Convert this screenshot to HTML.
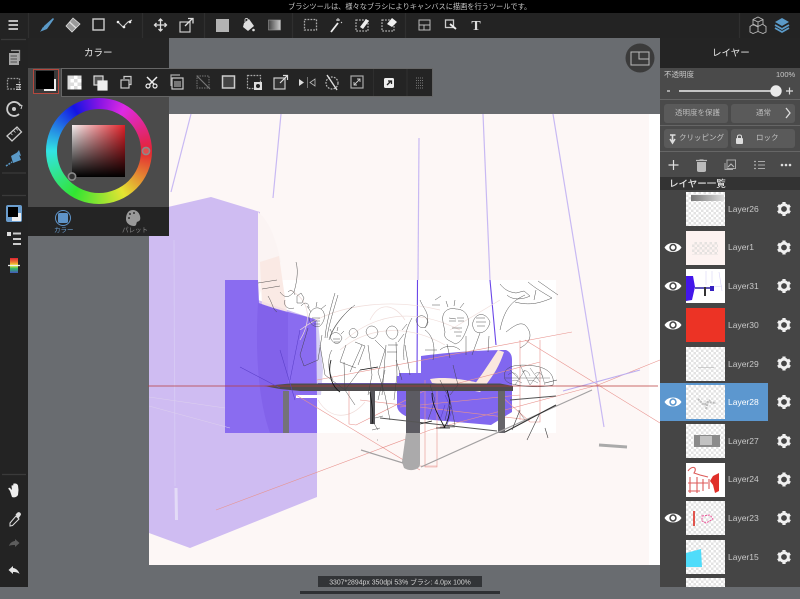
<!DOCTYPE html>
<html><head><meta charset="utf-8">
<style>
html,body{margin:0;padding:0;background:#696c70}
#r{position:relative;width:800px;height:599px;overflow:hidden;background:#696c70;font-family:"Liberation Sans","Noto Sans CJK JP",sans-serif;color:#ddd;filter:blur(.35px)}
#r div{position:absolute;box-sizing:border-box}
#r svg{position:absolute;overflow:visible}
.t{white-space:nowrap;line-height:1}
.btn{background:#5a5a5a;border-radius:3px;height:19px;width:64px}
.th{left:686px;width:39px;height:34px;background-color:#fff;background-image:conic-gradient(#e2e2e2 25%,#fff 0 50%,#e2e2e2 0 75%,#fff 0);background-size:5px 5px;overflow:hidden}
.lb{left:728px;font-size:8.5px;color:#c9c9c9}
</style></head><body><div id="r">

<!-- canvas -->
<svg style="left:0;top:0" width="800" height="599" viewBox="0 0 800 599">
<rect x="149" y="114" width="511" height="451" fill="#fdf7f6"/>
<rect x="649" y="114" width="11" height="451" fill="#fff"/>
<rect x="225" y="280" width="331" height="153" fill="#fff"/>
<!-- guide lines -->
<g fill="none" stroke="#c8b9f3" stroke-width="1.200">
<path d="M191 114L171 192"/><path d="M281 114L273 198"/>
<path d="M419 138L418 280"/><path d="M483 114L490 280"/><path d="M553 114L604 427"/>
</g>
<path d="M490 280L496 345M417.500 280L417 380" stroke="#6a46e8" stroke-width="1.100" fill="none"/>
<!-- lavender shape -->
<path d="M149 208L168 207L211 197L260 212L258 300L317 320L317 497L190 548L149 533Z" fill="#cfbcf2"/>
<path d="M258 212C268 220 275 235 281 262C270 270 262 285 258 300Z" fill="#fbf4f3"/>
<path d="M176 488L176.500 520" stroke="#e3dbf7" stroke-width="3"/><path d="M174 240L175 486" stroke="#d6c9f4" stroke-width="1"/>
<path d="M260 262L279 256L287 312L262 304Z" fill="#f9e6e0" opacity=".85"/>
<!-- purple rect -->
<path d="M225 280H258L259 303C275 310 300 314 317 320V433H225Z" fill="#8a6cf0"/>
<path d="M258 303L288 313V433H270C258 400 255 350 258 303Z" fill="#8262ea"/>
<path d="M316 320L317 395H321L323 370L318 322Z" fill="#d6cff4"/>
<!-- sofa -->
<path d="M421 356C450 352 485 350 506 350C511 352 512 356 512 360V412L491 425L410 418C400 414 397 410 397 405V376H399V373L421 373Z" fill="#8167ef"/>
<path d="M318 383H400V391H318Z" fill="#7e60ea"/>
<path d="M296 395H318V398H296Z" fill="#fff"/>
<!-- pale peach body over sofa -->
<path d="M470 390C480 378 490 362 498 350L504 352C498 370 490 380 480 392Z" fill="#fbe8df"/>
<path d="M430 379C445 376 470 380 482 384L478 386C470 384 450 385 432 383Z" fill="#fbe8df"/>
<!-- pale sketch -->
<g fill="none" stroke="#efdcd9" stroke-width=".7">
<path d="M300 330C340 300 400 300 440 310M318 400C330 420 350 420 365 402M290 290C310 300 312 320 300 340"/>
<path d="M370 320C380 300 395 305 405 320M450 330L500 300M345 340C380 310 420 310 460 330M340 350C370 325 410 325 445 345"/>
<path d="M149 397L225 408M149 406L230 428" stroke="#ddd0ee" stroke-width=".5"/>
</g>
<!-- red perspective -->
<g fill="none" stroke="#e8938e" stroke-width=".6">
<path d="M296 395L420 470M216 510L430 430L598 385"/>
<path d="M317 380L572 332M525 340L660 423M598 385L660 360"/>
<path d="M349 388V424L356 425L430 388M425 380V467H437V390M419 390V466H437M360 400L530 420M500 395L530 422H540V340M520 340V420M400 407L520 395M432 390L540 362"/>
</g>
<path d="M563 391L640 370" stroke="#bdaef0" stroke-width="1.100"/>
<!-- table -->
<path d="M264 386L290 383.500H500L513 386V391H300L280 389Z" fill="#4f4c4e"/>
<rect x="283" y="391" width="6" height="42" fill="#747278"/>
<rect x="406" y="391" width="14" height="42" fill="#5c5b62"/>
<path d="M406 433H420V464C420 470 410 472 404 468L402 462Z" fill="#abaaab"/>
<rect x="498" y="391" width="7" height="42" fill="#66656a"/>
<rect x="370" y="391" width="5" height="33" fill="#56555a"/>
<path d="M148 386H658" stroke="#b83c3c" stroke-width=".8"/>
<path d="M361 450L403 463M421 467L592 390" stroke="#a3a1a2" stroke-width="1.200" fill="none"/>
<path d="M505 432L556 405" stroke="#333" stroke-width="1.100"/>
<path d="M510 400L556 396M380 418L497 431" stroke="#555" stroke-width=".9"/>
<path d="M599 445L627 447" stroke="#aaa" stroke-width="3"/>
<!-- sketch -->
<g fill="none" stroke="#3e3e3e" stroke-width=".45">
<path d="M258 283L277 280M262 289L280 286M296 262C299 272 296 285 294 292C290 296 286 300 280 292M268 296C272 302 273 310 277 312M285 300C283 306 288 310 294 308"/>
<path d="M297 296l4 -3 3 5 -2 5 -5 0zM301 306c4 -5 8 -3 8 2M288 292c3 -3 6 -1 7 3"/>
<path d="M309 316C311 308 318 305 323 311C326 316 324 322 320 326C314 328 309 324 309 316ZM311 312L307 306M316 307L317 302M321 309L326 305M312 318h8M312 321h8M314 324h6"/>
<path d="M308 328L300 355L304 366L318 360L322 335"/>
<path d="M320 345L325 375L345 390M335 293C330 310 326 325 325 338M338 295C333 312 328 328 327 338M355 305C342 315 332 328 329 340M352 307C340 318 332 330 330 338"/>
<path d="M330 337C333 330 340 332 342 338C340 345 334 346 330 337ZM332 333l-2 -4M337 331l1 -4M341 334l3 -3M333 339h7M334 342h6"/>
<path d="M349 333C350 327 356 327 358 333C357 339 351 340 349 333ZM346 345L340 362L356 368M355 342L365 346L358 365"/>
<path d="M366 332C367 324 376 324 378 332C377 340 369 341 366 332ZM362 345L350 372M375 340L385 350L378 372L385 395M368 345L372 375L368 395"/>
<path d="M386 332C388 324 396 324 398 332C397 341 389 342 386 332ZM386 345L382 395M396 342L397 375L394 400M388 345h10M387 352h10"/>
<path d="M416 320C418 314 426 314 428 322C427 330 418 330 416 320ZM405 345L410 375M420 300C424 310 432 315 425 328M412 318C405 330 403 345 404 360M396 360L402 380M402 330l5 -6M398 342l6 -8"/>
<path d="M425 330C432 335 436 345 433 360M435 300l6 -4M432 305l8 0M425 350l12 0M440 350C445 345 455 345 460 350"/>
<path d="M443 322C441 312 448 307 456 309C466 309 470 318 468 326C464 336 462 342 455 344C450 340 443 340 445 332ZM448 307l-2 -6M454 306l1 -6M460 308l4 -5M449 318l7 1M457 318l7 0M449 321h7M458 321h6M452 328h10M454 332h8M456 336h5"/>
<path d="M466 336L466 355M447 344L450 358"/>
<path d="M473 322C476 312 486 312 490 322C488 332 480 335 475 331C473 328 472 325 473 322ZM476 318h9M476 322h10M477 326h8M480 333L472 355M489 336L488 352"/>
<path d="M500 330C505 305 515 300 525 295M500 284C504 289 508 292 516 293L524 291L530 296C522 300 512 300 507 295M515 302C530 306 540 303 552 298M528 282C535 288 542 292 552 298M538 281L558 295M536 290L534 300M506 332C515 325 520 322 525 325M525 325C530 330 535 340 520 348"/>
<path d="M333 380C327 370 328 355 332 350M344 362L345 390L360 370M345 390L355 405M385 370L378 400M378 430L372 420M385 395L390 420M375 418l8 -2M372 430l8 -2M378 440h-1M430 385L435 400L428 420M440 380L450 400L445 420M453 365L458 385L450 395M450 400L455 425L440 428M440 427h15"/>
<path d="M505 372C508 365 520 364 535 366C548 368 555 375 553 385C540 388 525 387 512 384C505 382 503 378 505 372Z"/>
<path d="M510 370L520 380M520 365L530 385M530 368L540 382M540 368L545 385M515 385L525 370M530 385L540 372M505 378L550 378M508 375c4 -4 8 -2 10 2M522 372c4 -3 7 0 8 4M535 374c3 -3 6 -1 8 3M512 381c4 -2 6 0 10 2M528 381c4 -2 6 0 10 2" stroke-width=".35"/>
<path d="M545 383L557 380M512 430L520 410M527 440L540 413M548 438L545 428" stroke-width=".6"/>
<path d="M518 410L525 420" stroke-width=".35"/>
</g>
<g fill="none" stroke="#141414" stroke-width=".85">
<path d="M331 360C328 370 330 385 340 392M360 370L378 367M370 392C372 405 374 415 372 424M432 393C432 405 438 415 445 428M447 390C452 405 450 418 444 428M420 424L432 421M436 428H450"/>
</g>
<path d="M445 395L452 410L447 425M445 405L440 420M300 330L290 380M280 350L295 400M240 367L280 388" stroke="#5a3fc8" stroke-width=".55" fill="none"/>
<!-- bottom status -->
<rect x="318" y="576" width="164" height="11" fill="#323437"/>
<text x="400" y="584.300" font-size="6.900" fill="#d4d4d4" text-anchor="middle" font-family="Liberation Sans,Noto Sans CJK JP,sans-serif">3307*2894px 350dpi 53% ブラシ: 4.0px 100%</text>
<rect x="300" y="591" width="200" height="3" fill="#2e3033"/>
<!-- nav -->
<circle cx="640" cy="58" r="14.500" fill="#3b3b3b"/>
<rect x="631" y="52" width="18" height="13" fill="none" stroke="#bbb" stroke-width="1"/><rect x="639" y="52" width="10" height="7" fill="none" stroke="#bbb" stroke-width="1"/>
</svg>

<!-- top bars -->
<div style="left:0;top:0;width:800px;height:13px;background:#000"></div>
<div class="t" style="left:288px;top:2.500px;font-size:7.200px;color:#c8c8c8">ブラシツールは、様々なブラシによりキャンバスに描画を行うツールです。</div>
<div style="left:0;top:13px;width:800px;height:25px;background:#232323"></div>

<!-- left bar -->
<div style="left:0;top:38px;width:28px;height:549px;background:#232323"></div>

<!-- color panel -->
<div style="left:28px;top:38px;width:141px;height:30px;background:#242424"></div>
<div class="t" style="left:84px;top:48.500px;font-size:9.500px;color:#e8e8e8">カラー</div>
<div style="left:28px;top:68px;width:141px;height:139px;background:#4b4b4b"></div>
<div style="left:28px;top:207px;width:141px;height:29px;background:#242424"></div>
<div class="t" style="left:54px;top:228px;font-size:6.500px;color:#6a9ccc">カラー</div>
<div class="t" style="left:122px;top:228px;font-size:6.500px;color:#888">パレット</div>
<div style="left:33px;top:69px;width:26px;height:25px;background:#3a3a3a;border:1px solid #b5483e"></div>
<div style="left:44px;top:79px;width:12px;height:12px;background:#eee"></div>
<div style="left:36px;top:71px;width:18px;height:18px;background:#000"></div>
<div style="left:45.500px;top:98px;width:106px;height:106px;border-radius:50%;opacity:.93;background:conic-gradient(#8a10f0,#e828f0 30deg,#f02030 90deg,#f0f030 150deg,#30f030 210deg,#30f0f0 270deg,#1010f0 330deg,#8a10f0)"></div>
<div style="left:56.500px;top:109px;width:84px;height:84px;border-radius:50%;background:#4b4b4b"></div>
<div style="left:72px;top:125px;width:53px;height:52px;background:linear-gradient(to bottom,transparent,#000),linear-gradient(to right,#f4f0f0,#e02028)"></div>
<svg style="left:0;top:0" width="170" height="240" viewBox="0 0 170 240" fill="none">
<circle cx="146" cy="151" r="3.600" stroke="#8a8a8a" stroke-width="1.600" fill="#e05050"/>
<circle cx="72" cy="176.500" r="3.600" stroke="#8a8a8a" stroke-width="1.600" fill="#333"/>
<circle cx="63" cy="218" r="7.500" stroke="#5f94c8" stroke-width="1"/>
<rect x="58" y="213" width="10" height="10" rx="1.500" fill="#5f94c8"/>
<path d="M133 210C127 210 126 216 126 219C126 224 131 226 134 226C137 226 136 223 137 222C139 221 141 221 140 216C139 212 136 210 133 210Z" fill="#999"/>
<circle cx="130" cy="214" r="1" fill="#333"/><circle cx="134" cy="213" r="1" fill="#333"/><circle cx="129" cy="218" r="1" fill="#333"/>
</svg>

<!-- floating toolbar -->
<div style="left:61px;top:68px;width:372px;height:29px;background:#242424;border:1px solid #666"></div>
<svg style="left:0;top:0" width="440" height="100" viewBox="0 0 440 100" fill="none" stroke="#ddd" stroke-width="1.200">
<rect x="67.500" y="75.500" width="14" height="14" fill="#ddd" stroke="none"/><path d="M74 75.500h3.500v3.500h-3.500zM70.500 79h3.500v3.500h-3.500zM77.500 79h4v3.500h-4zM74 82.500h3.500V86h-3.500zM70.500 86h3.500v3.500h-3.500zM77.500 86h4v3.500h-4z" fill="#fff" stroke="none"/>
<rect x="94" y="76" width="9" height="9" fill="#555" stroke="#ddd"/><rect x="98" y="81" width="9" height="9" fill="#eee" stroke="#eee"/>
<rect x="121" y="80" width="8" height="8" stroke="#ccc"/><path d="M124 79v-2.500h7v8h-2" stroke="#ccc"/>
<path d="M147 77L157 87M157 77L147 87" stroke-width="1.500" stroke="#eee"/><circle cx="148" cy="86" r="2" fill="#242424" stroke="#eee"/><circle cx="155" cy="86" r="2" fill="#242424" stroke="#eee"/>
<rect x="172" y="78" width="11" height="11" stroke="#ccc"/><path d="M171 86V75h9" stroke="#aaa"/><rect x="174" y="81" width="7" height="6" fill="#777" stroke="none"/>
<rect x="197" y="76" width="12" height="12" stroke="#666" stroke-dasharray="1.500 1"/><path d="M197 76L210 89" stroke="#777"/>
<rect x="222.500" y="76" width="12" height="12" fill="#444" stroke="#ccc" stroke-width="1.500"/>
<rect x="247.500" y="75.500" width="13" height="13" stroke="#aaa" stroke-dasharray="1.800 1.200"/><rect x="254" y="82" width="8" height="8" fill="#ddd" stroke="none"/><circle cx="258" cy="86" r="2" fill="#222" stroke="none"/>
<rect x="274" y="78" width="11" height="11" stroke="#ccc" fill="#333"/><path d="M280 83L287 76M283 75.500h4.500V80" stroke="#ddd"/>
<path d="M299 79V86L304 82.500Z" fill="#ddd" stroke="none"/><path d="M307.500 77V88" stroke="#888" stroke-width=".8"/><path d="M315 79V86L310 82.500Z" stroke="#bbb" stroke-width=".8"/>
<circle cx="332" cy="83" r="6" stroke="#bbb" stroke-dasharray="1.800 1.200"/><path d="M327 75L337 90" stroke="#ddd" stroke-width="1.400"/>
<rect x="351" y="76" width="12" height="12" stroke="#aaa"/><path d="M354 85L360 79M354 82V85H357M360 82V79H357" stroke="#ccc" stroke-width=".9"/>
<path d="M373.500 69V96M407 69V96" stroke="#2e2e2e"/>
<rect x="384" y="78" width="10" height="10" rx="1.500" fill="#eee" stroke="none"/><path d="M387 85L391 81M388 81H391.500V84" stroke="#222" stroke-width="1.300"/>
<path d="M416 78h7M416 80.500h7M416 83h7M416 85.500h7M416 88h7" stroke="#777" stroke-width="1" stroke-dasharray="1 1"/>
</svg>

<!-- top toolbar + side icons -->
<svg style="left:0;top:0" width="800" height="599" viewBox="0 0 800 599" fill="none" stroke="#ddd" stroke-width="1.300">
<path d="M18 21H8.500M18 25H8.500M18 29H8.500" stroke="#eee" stroke-width="1.500"/>
<path d="M28.500 13V38M142.500 13V38M204.500 13V38M292.500 13V38M405.500 13V38M739.500 13V38" stroke="#2f2f2f"/>
<path d="M42 31L44 26L53 18L54 19L47 29Z" fill="#5b9ac8" stroke="none"/><path d="M40 32L43 27L45 29Z" fill="#5b9ac8" stroke="none"/>
<path d="M66 26L73 18L80 24L72 32Z" fill="#999" stroke="#ddd" stroke-width=".8"/><path d="M69.500 22L76 28" stroke="#ddd"/>
<rect x="93" y="19" width="11" height="11" stroke="#ccc" stroke-width="1.400"/>
<path d="M118 22L123 27L128 22L132 20" stroke="#ccc" stroke-width="1.100"/><circle cx="118" cy="22" r="1.300" fill="#eee" stroke="none"/><circle cx="124" cy="27" r="1.300" fill="#eee" stroke="none"/><circle cx="130" cy="22" r="1.300" fill="#eee" stroke="none"/>
<path d="M160.500 19V31M154.500 25H166.500M158.500 21L160.500 19L162.500 21M158.500 29L160.500 31L162.500 29M156.500 23L154.500 25L156.500 27M164.500 23L166.500 25L164.500 27"/>
<rect x="180" y="22" width="10" height="10" stroke="#ccc" stroke-width="1.200"/><path d="M185 26L192 19M188 18.500H193V23.500" stroke="#ddd"/>
<rect x="216" y="19" width="13" height="13" fill="#b3b3b3" stroke="none"/>
<path d="M244 23L249 19L254 26L248 31L243 27Z" fill="#ddd" stroke="none"/><path d="M245 22V19.500C245 18 248 18 248 20" stroke="#ddd" stroke-width=".8"/><circle cx="253.500" cy="30" r="1.300" fill="#ddd" stroke="none"/>
<defs><linearGradient id="g1"><stop offset="0" stop-color="#444"/><stop offset="1" stop-color="#ccc"/></linearGradient></defs>
<rect x="268.500" y="20" width="12" height="10" fill="url(#g1)" stroke="#999" stroke-width=".6"/>
<rect x="304.500" y="19.500" width="12" height="10.500" stroke="#aaa" stroke-dasharray="1.800 1.200"/>
<path d="M331 32L338 23" stroke="#eee" stroke-width="1.800"/><path d="M338 18V21M336 20H340M341 22L342 23" stroke="#ddd" stroke-width=".9"/>
<rect x="356" y="20" width="12" height="11" stroke="#aaa" stroke-dasharray="1.800 1.200"/><path d="M360 27L366 19L369 21L363 29Z" fill="#eee" stroke="none"/>
<rect x="382" y="20" width="12" height="11" stroke="#aaa" stroke-dasharray="1.800 1.200"/><path d="M387 24L392 18L397 22L392 27Z" fill="#eee" stroke="none"/>
<path d="M419 20H430V25H419ZM419 25V30H424V25M424 25H430V30H424" stroke="#bbb" stroke-width="1"/>
<rect x="445.500" y="20" width="8" height="7.500" stroke="#ccc"/><path d="M450 24L456 29" stroke="#eee" stroke-width="1.800"/>
<text x="476" y="30" font-family="Liberation Serif,serif" font-size="14" font-weight="700" fill="#ddd" stroke="none" text-anchor="middle">T</text>
<path d="M758 18L763 20.500V25L758 27.500L753 25V20.500ZM753 25.500L758 28V32.500L753 34.500L750 33V27.500ZM763 25.500L766 27.500V33L763 34.500L758 32.500M753 20.500L758 23L763 20.500M758 23V27.500" stroke="#bbb" stroke-width=".9" transform="translate(0,-1)"/>
<path d="M782 18L789 22L782 26L775 22Z" fill="#5b9ac8" stroke="none"/><path d="M775 25L782 29L789 25M775 28L782 32L789 28" stroke="#5b9ac8" stroke-width="1.800"/>
<!-- left side -->
<path d="M1 39.500H26M2 173H26M2 195.500H26M2 474.500H26" stroke="#3a3a3a"/>
<rect x="9" y="53" width="10" height="12" fill="#a5a5a5" stroke="none"/><path d="M11 50.500h8.500V61" stroke="#999"/><path d="M10.500 56H17M10.500 59H17M10.500 62H17" stroke="#333" stroke-width=".8"/>
<rect x="7.500" y="78.500" width="12" height="10.500" stroke="#999" stroke-dasharray="1.800 1.200"/><path d="M16 84.500H21M16 87H21M16 89.500H21" stroke="#ccc" stroke-width="1"/>
<path d="M20.500 106A7 7 0 1 0 19 114" stroke="#ccc" stroke-width="1.800"/><circle cx="14" cy="109" r="2" fill="#ccc" stroke="none"/><path d="M18 104L22 105.500L21 109" stroke="#ccc" stroke-width="1"/>
<path d="M7 136L17 127L21.500 132L12 141Z" stroke="#ccc" stroke-width="1.300"/><path d="M10.500 133L12.500 135M13.500 130.500L15.500 132.500M16 128.500L18 130.500" stroke="#ccc" stroke-width=".8"/>
<path d="M11 156L18 152L21 160L13 163Z" fill="#5b9ac8" stroke="none"/><path d="M16 154L19 150L21 156Z" fill="#5b9ac8" stroke="none"/><path d="M6 166L12 162" stroke="#5b9ac8" stroke-width="1.500" stroke-dasharray="2 1"/>
<rect x="6" y="205" width="16" height="17" rx="2" fill="#6a9ccc" stroke="none"/><rect x="12" y="213" width="9" height="8" fill="#eee" stroke="none"/><rect x="8" y="207" width="10" height="10" fill="#000" stroke="none"/>
<path d="M13 233.500H21M13 239H21M13 244H21" stroke="#ccc" stroke-width="2"/><rect x="7" y="232" width="4" height="4" fill="#ddd" stroke="none"/>
<defs><linearGradient id="g2" x1="0" y1="0" x2="0" y2="1"><stop offset="0" stop-color="#d23"/><stop offset=".3" stop-color="#e83"/><stop offset=".5" stop-color="#ee3"/><stop offset=".7" stop-color="#3b6"/><stop offset="1" stop-color="#45b"/></linearGradient></defs>
<rect x="10" y="258" width="8" height="15" fill="url(#g2)" stroke="none"/><path d="M8 265.500H20" stroke="#eee" stroke-width="1.300"/>
<path d="M10 491L8.500 489C8 488 9 487.500 10 488L12 490L11.500 486C11.500 485 13 485 13 486L13.500 483.500H15L15.500 483.500L17 484L18 485.500L18.500 490L18 495C17 497 14 498 12 497Z" fill="#eee" stroke="none"/>
<path d="M10 523L16 516L19 519L12.500 525.500L10 526Z" stroke="#ddd" stroke-width="1"/><path d="M16 515L18 513C19 512 21 514 20 515L18 518" fill="#ddd" stroke="#ddd"/>
<path d="M9 546C10 542 14 541 15 541V539L19.500 543L15 547V545C12.500 545 11 545 9 546Z" fill="#5c5c5c" stroke="none"/>
<path d="M19.500 574C18.500 570 15 568 13 568V566L8.500 570L13 574V572C16 572 18 572.500 19.500 574Z" fill="#e6e6e6" stroke="none"/>
</svg>

<!-- right panel -->
<div style="left:660px;top:38px;width:140px;height:30px;background:#242424"></div>
<div class="t" style="left:712px;top:48.500px;font-size:9.500px;color:#e8e8e8">レイヤー</div>
<div style="left:660px;top:68px;width:140px;height:109px;background:#4a4a4a"></div>
<div style="left:660px;top:99px;width:140px;height:1px;background:#666"></div>
<div style="left:660px;top:125px;width:140px;height:1px;background:#666"></div>
<div style="left:660px;top:151px;width:140px;height:1px;background:#666"></div>
<div class="t" style="left:664px;top:71px;font-size:7.500px;color:#c8c8c8">不透明度</div>
<div class="t" style="left:776px;top:71px;font-size:7.500px;color:#c8c8c8">100%</div>
<div class="btn" style="left:664px;top:104px"></div><div class="btn" style="left:731px;top:104px"></div>
<div class="btn" style="left:664px;top:129px"></div><div class="btn" style="left:731px;top:129px"></div>
<div class="t" style="left:675px;top:109px;font-size:7.500px;color:#bbb">透明度を保護</div>
<div class="t" style="left:756px;top:109px;font-size:7.500px;color:#bbb">通常</div>
<div class="t" style="left:679px;top:134px;font-size:7.500px;color:#c4c4c4">クリッピング</div>
<div class="t" style="left:756px;top:134px;font-size:7.500px;color:#c4c4c4">ロック</div>
<div style="left:660px;top:177px;width:140px;height:13px;background:#333"></div>
<div class="t" style="left:669px;top:179.500px;font-size:9.500px;color:#e6e6e6;font-weight:500">レイヤー一覧</div>
<div style="left:660px;top:190px;width:140px;height:397px;background:#454545"></div>
<div style="left:660px;top:383px;width:108px;height:38px;background:#5c97cf"></div>

<div class="th" style="top:192px"><svg style="left:5px;top:3px" width="33" height="6"><defs><linearGradient id="g3"><stop offset="0" stop-color="#777"/><stop offset="1" stop-color="#ddd"/></linearGradient></defs><rect width="33" height="6" fill="url(#g3)"/></svg></div>
<div style="left:686px;top:230.500px;width:39px;height:34px;background:#fdf3f1"><div style="left:6px;top:11px;width:26px;height:13px;background-image:conic-gradient(#e5e2e0 25%,transparent 0 50%,#e5e2e0 0 75%,transparent 0);background-size:5px 5px"></div></div>
<div style="left:686px;top:269px;width:39px;height:34px;background:#fff"><svg style="left:0;top:0" width="39" height="34" viewBox="0 0 39 34"><path d="M0 7L7 7L9 18L6 31L0 32Z" fill="#4316ea"/><path d="M9 19H28" stroke="#2a1fa0" stroke-width="1.500"/><path d="M19 18V27" stroke="#333" stroke-width="2"/><path d="M24 17H28V22H24Z" fill="#3520c0"/><path d="M20 2V16M26 2V14M33 3L36 22M28 18L36 17" stroke="#d8d2f7" stroke-width=".6" fill="none"/></svg></div>
<div style="left:686px;top:308px;width:39px;height:34px;background:#ec3325"></div>
<div class="th" style="top:346.500px"><div style="left:12px;top:20px;width:16px;height:1.500px;background:#ccc"></div></div>
<div class="th" style="top:385px"><svg style="left:0;top:0" width="39" height="34"><path d="M12 14L18 20L24 15M20 24L22 17L30 18" stroke="#bbb" stroke-width="2" fill="none" stroke-dasharray="2 1"/></svg></div>
<div class="th" style="top:424px"><div style="left:8px;top:11px;width:26px;height:12px;background:#8a8a8a"></div><div style="left:14px;top:12px;width:12px;height:9px;background:#c2c2c2"></div></div>
<div style="left:686px;top:462.500px;width:39px;height:34px;background:#fff"><svg style="left:0;top:0" width="39" height="34" viewBox="0 0 39 34"><path d="M2 8C6 2 12 4 8 10L14 12L22 14M4 14V30M11 14V30M17 16V28M23 16V26M2 20H22M2 28H14" stroke="#dc5a58" stroke-width="1.100" fill="none"/><path d="M27 13L33 10L33 28L29 30L27 22L24 18Z" fill="#e0302a"/></svg></div>
<div class="th" style="top:501px"><svg style="left:0;top:0" width="39" height="34"><path d="M8 10V25" stroke="#e0443c" stroke-width="1.800"/><path d="M16 15L24 14L27 18L20 22L16 20Z" stroke="#e59" stroke-width="1" fill="none" stroke-dasharray="2 1"/></svg></div>
<div class="th" style="top:539.500px"><svg style="left:0;top:0" width="39" height="34"><path d="M0 13L15 9L16 27L0 27Z" fill="#4fdcfa"/></svg></div>
<div class="th" style="top:578px;height:9px"></div>

<div class="lb t" style="top:204.500px">Layer26</div>
<div class="lb t" style="top:243px">Layer1</div>
<div class="lb t" style="top:282px">Layer31</div>
<div class="lb t" style="top:320.500px">Layer30</div>
<div class="lb t" style="top:359.500px">Layer29</div>
<div class="lb t" style="top:398px;color:#fff">Layer28</div>
<div class="lb t" style="top:436.500px">Layer27</div>
<div class="lb t" style="top:475px">Layer24</div>
<div class="lb t" style="top:514px">Layer23</div>
<div class="lb t" style="top:552.500px">Layer15</div>

<svg style="left:0;top:0" width="800" height="599" viewBox="0 0 800 599" fill="none">
<defs>
<g id="gear"><circle r="4.300" stroke="#f0f0f0" stroke-width="2.800"/><path d="M0-7V-4.500M0 7V4.500M-6-3.500L-4-2.200M6 3.500L4 2.200M-6 3.500L-4 2.200M6-3.500L4-2.200" stroke="#f0f0f0" stroke-width="3.200"/></g>
<g id="eye"><path d="M-8.500 0C-5-6 5-6 8.500 0C5 6-5 6-8.500 0Z" fill="#fff"/><circle r="3.700" fill="#454545"/><circle r="2.200" fill="#fff"/></g>
</defs>
<use href="#gear" x="784" y="209"/><use href="#gear" x="784" y="247.500"/><use href="#gear" x="784" y="286"/><use href="#gear" x="784" y="325"/><use href="#gear" x="784" y="363.500"/><use href="#gear" x="784" y="402"/><use href="#gear" x="784" y="441"/><use href="#gear" x="784" y="479.500"/><use href="#gear" x="784" y="518"/><use href="#gear" x="784" y="557"/>
<use href="#eye" x="673" y="247.500"/><use href="#eye" x="673" y="286"/><use href="#eye" x="673" y="325"/><use href="#eye" x="673" y="518"/>
<g transform="translate(673,402)"><path d="M-8.500 0C-5-6 5-6 8.500 0C5 6-5 6-8.500 0Z" fill="#fff"/><circle r="3.700" fill="#5c97cf"/><circle r="2.200" fill="#fff"/></g>
<!-- slider -->
<path d="M667 91H670M786 91H793M789.500 87.500V94.500" stroke="#ddd" stroke-width="1.200"/>
<path d="M679 91H776" stroke="#eee" stroke-width="1.600"/><circle cx="776" cy="91" r="5.700" fill="#ebebeb"/>
<path d="M786 108L790 113L786 118" stroke="#ddd" stroke-width="1.300"/>
<path d="M670 135H675.500M672.500 135V143M670 139L672.500 143L675 139" stroke="#ddd" stroke-width="1.600"/>
<rect x="736" y="138" width="7" height="6" rx="1" fill="#ddd"/><path d="M737.500 138V136.500C737.500 134.500 741.500 134.500 741.500 136.500V138" stroke="#ddd"/>
<!-- icons row -->
<path d="M668.500 165H678.500M673.500 160V170" stroke="#e0e0e0" stroke-width="1.200"/>
<path d="M697 162H706V170.500C706 171.500 705 172 704 172H699C698 172 697 171.500 697 170.500Z" fill="#bbb"/><path d="M696 160.500H707M699.500 160H703.500" stroke="#bbb" stroke-width="1.300"/>
<rect x="727" y="160" width="8.500" height="8.500" stroke="#aaa"/><path d="M725 163V169.500H733" stroke="#aaa"/><path d="M728 167L731 164L734 167" stroke="#bbb"/>
<path d="M758 161.500H765M758 165H765M758 168.500H765" stroke="#aaa" stroke-width="1"/><path d="M754 161.500H756M754 165H756M754 168.500H756" stroke="#aaa" stroke-width="1.200"/>
<circle cx="782" cy="165" r="1.300" fill="#ddd"/><circle cx="786" cy="165" r="1.300" fill="#ddd"/><circle cx="790" cy="165" r="1.300" fill="#ddd"/>
</svg>
</div></body></html>
